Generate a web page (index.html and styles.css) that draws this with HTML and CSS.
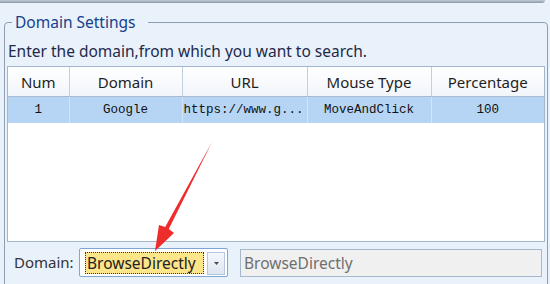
FILE: index.html
```html
<!DOCTYPE html>
<html lang="en">
<head>
    <meta charset="UTF-8">
    <meta name="viewport" content="width=device-width, initial-scale=1.0">
    <title>Domain Settings</title>
    <link rel="stylesheet" href="styles.css">
</head>
<body>

<div class="top-edge"></div>

<fieldset class="group">
    <legend>Domain Settings</legend>
    <div class="group-body">
        <p class="hint">Enter the domain,from which you want to search.</p>

        <div class="grid">
            <table>
                <colgroup>
                    <col class="c-num">
                    <col class="c-domain">
                    <col class="c-url">
                    <col class="c-mouse">
                    <col class="c-pct">
                </colgroup>
                <thead>
                    <tr>
                        <th>Num</th>
                        <th>Domain</th>
                        <th>URL</th>
                        <th>Mouse Type</th>
                        <th>Percentage</th>
                    </tr>
                </thead>
                <tbody>
                    <tr class="selected">
                        <td>1</td>
                        <td>Google</td>
                        <td class="url">https://www.g...</td>
                        <td>MoveAndClick</td>
                        <td>100</td>
                    </tr>
                </tbody>
            </table>
        </div>

        <div class="picker">
            <span class="picker-label">Domain:</span>
            <div class="combo">
                <span class="combo-value">BrowseDirectly</span>
                <span class="combo-btn">
                    <svg width="5" height="3" viewBox="0 0 5 3"><polygon points="0,0 5,0 2.5,3" fill="#4a4a4a"/></svg>
                </span>
            </div>
            <div class="url-box">BrowseDirectly</div>
        </div>
    </div>
</fieldset>

<!-- red annotation arrow over the form -->
<svg class="arrow" width="550" height="284" viewBox="0 0 550 284">
    <polygon points="212,142 168.8,229 174,233 155,251 159,225 165.2,227.1" fill="#ee2c2c"/>
</svg>

</body>
</html>
```

FILE: styles.css
```css
body {
    margin: 0;
    width: 550px;
    height: 284px;
    overflow: hidden;
    position: relative;
    background-color: #e9f1fb;
    font-family: "Noto Sans", "Open Sans", sans-serif;
    font-size: 15.5px;
}

.top-edge {
    width: 545px;
    height: 3px;
    background: linear-gradient(#c3ccd7, #8b97a7);
    border-bottom-right-radius: 3px;
}

.group {
    margin: 9px 0 0 4px;
    padding: 0;
    width: 544px;
    height: 300px;
    box-sizing: border-box;
    border: 1px solid #8f9db1;
    border-radius: 4px;
}

.group legend {
    margin-left: 7px;
    padding: 0 13px 0 3px;
    line-height: 20px;
    color: #15428b;
}

.group-body {
    padding: 9px 2px 0 2px;
}

.hint {
    margin: 0 0 5px 1px;
    line-height: 20px;
    color: #1f2a48;
}

.grid {
    height: 176px;
    box-sizing: border-box;
    border: 1px solid #a4b6cc;
    background-color: #fff;
}

.grid table {
    width: 100%;
    border-collapse: collapse;
    table-layout: fixed;
}

.c-num { width: 61px; }
.c-domain { width: 113px; }
.c-url { width: 125px; }
.c-mouse { width: 124px; }
.c-pct { width: 113px; }

.grid th {
    height: 29px;
    padding: 0;
    font-size: 15px;
    font-weight: normal;
    color: #1e1e1e;
    background: linear-gradient(#ffffff, #f1f5fa);
    border-right: 1px solid #c3d0e0;
    border-bottom: 1px solid #a9bcd4;
}

.grid td {
    height: 26px;
    padding: 0;
    text-align: center;
    font-family: "Liberation Mono", monospace;
    font-size: 12.5px;
    color: #111;
    border-right: 1px solid #d3e4f7;
    white-space: nowrap;
}

.grid th:last-child,
.grid td:last-child {
    border-right: none;
}

.grid td.url {
    text-align: left;
    padding-left: 1px;
}

.grid tr.selected td {
    background-color: #b6d5f5;
}

.picker {
    display: flex;
    align-items: flex-start;
    margin-top: 6px;
}

.picker-label {
    width: 72px;
    padding-left: 7px;
    box-sizing: border-box;
    line-height: 29px;
    font-size: 15px;
    color: #333;
}

.combo {
    display: flex;
    gap: 3px;
    width: 149px;
    height: 29px;
    box-sizing: border-box;
    padding: 3px 2px 0 5px;
    border: 1px solid #7fa5d3;
    border-radius: 2px;
    background-color: #fff;
}

.combo-value {
    width: 119px;
    height: 22px;
    box-sizing: border-box;
    padding-left: 1px;
    line-height: 20px;
    border: 1px dotted #333;
    background-color: #fde58a;
    color: #222;
}

.combo-btn {
    display: flex;
    align-items: center;
    justify-content: center;
    width: 18px;
    height: 23px;
    box-sizing: border-box;
    border: 1px solid #b5c7de;
    background: linear-gradient(#f5f8fc, #dce6f2);
}

.url-box {
    margin: 1px 0 0 12px;
    width: 302px;
    height: 28px;
    box-sizing: border-box;
    padding-left: 3px;
    line-height: 26px;
    border: 1px solid #a8b8cc;
    background-color: #f0f0f0;
    color: #6f6f6f;
}

.arrow {
    position: absolute;
    left: 0;
    top: 0;
    pointer-events: none;
}
```
